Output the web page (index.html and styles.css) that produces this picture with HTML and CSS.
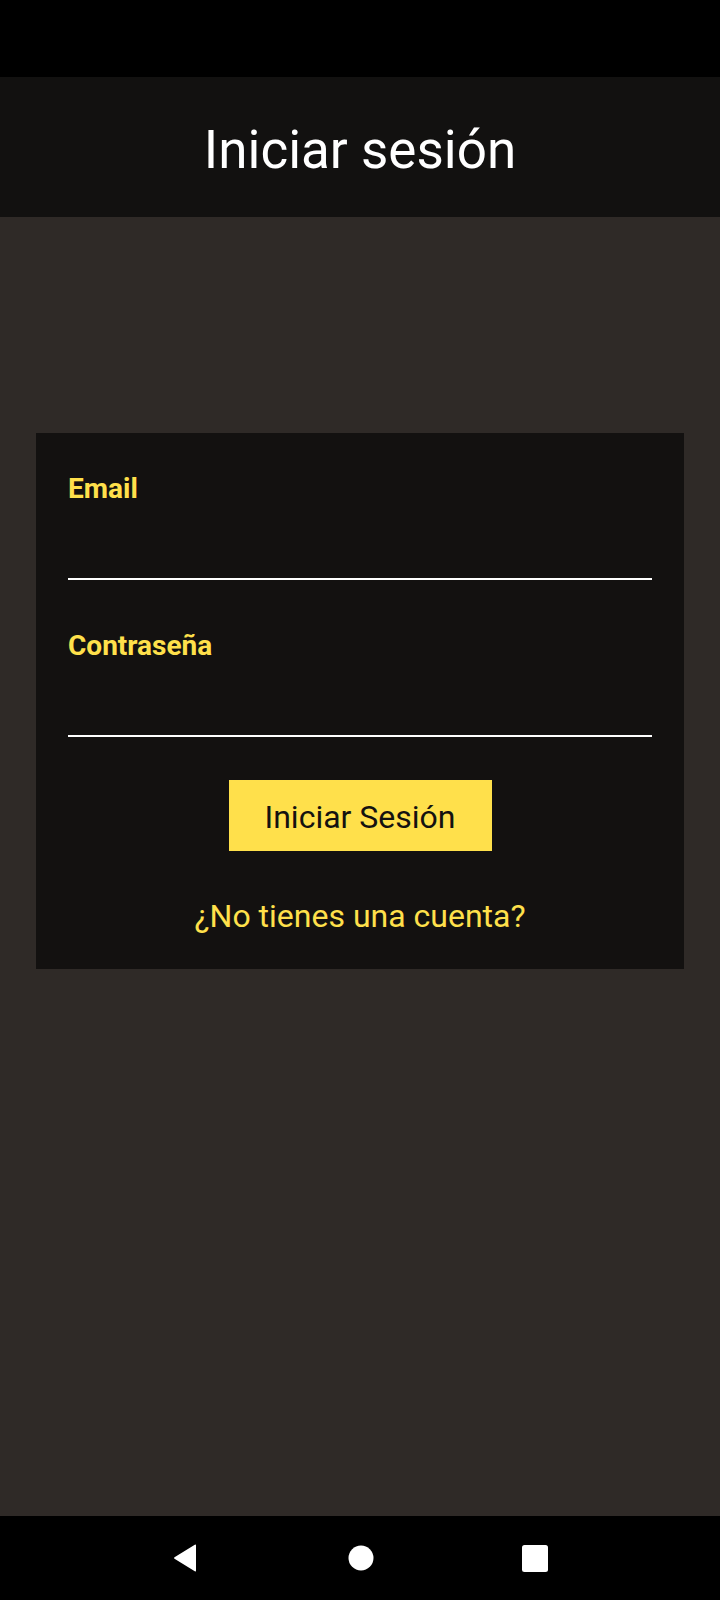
FILE: index.html
```html
<!DOCTYPE html>
<html lang="es">
<head>
<meta charset="utf-8">
<title>Iniciar sesión</title>
<link rel="stylesheet" href="styles.css">
</head>
<body>
<div class="screen">
  <div class="status-bar"></div>
  <header class="app-bar">
    <h1 class="app-title">Iniciar sesión</h1>
  </header>
  <main class="content">
    <form class="card">
      <div class="field">
        <label class="field-label" for="email">Email</label>
        <input class="field-input field-input--email" id="email" type="email">
      </div>
      <div class="field field--second">
        <label class="field-label" for="pass">Contraseña</label>
        <input class="field-input field-input--pass" id="pass" type="password">
      </div>
      <div class="actions">
        <button class="btn" type="button">Iniciar Sesión</button>
        <a class="link">¿No tienes una cuenta?</a>
      </div>
    </form>
  </main>
  <nav class="nav-bar">
    <svg class="nav-icon" width="26" height="28" viewBox="0 0 26 28"><path d="M24 1.5 L24 26.5 Q24 28 22.8 27.2 L2.5 14.8 Q1.4 14 2.5 13.2 L22.8 0.8 Q24 0 24 1.5 Z" fill="#fff"/></svg>
    <svg class="nav-icon" width="26" height="26" viewBox="0 0 26 26"><circle cx="13" cy="13" r="12.5" fill="#fff"/></svg>
    <svg class="nav-icon" width="26" height="27" viewBox="0 0 26 27"><rect x="0" y="0" width="26" height="27" rx="2.5" fill="#fff"/></svg>
  </nav>
</div>
</body>
</html>
```
FILE: styles.css
```css
* { box-sizing: border-box; }
html, body {
  margin: 0;
  padding: 0;
  background: #2f2a27;
}
body {
  font-family: Roboto, "Noto Sans", "Liberation Sans", sans-serif;
}
.screen {
  width: 720px;
  height: 1600px;
  display: flex;
  flex-direction: column;
  background: #2f2a27;
}
.status-bar {
  height: 77px;
  background: #000;
  flex: none;
}
.app-bar {
  height: 140px;
  flex: none;
  background: #121110;
  padding-top: 42px;
}
.app-title {
  margin: 0;
  text-align: center;
  color: #fff;
  font-weight: 400;
  font-size: 53px;
  line-height: 62px;
}
.content {
  flex: 1;
  padding: 216px 36px 0 36px;
}
.card {
  background: #131110;
  padding: 39px 32px 34px 32px;
  display: flex;
  flex-direction: column;
}
.field {
  display: flex;
  flex-direction: column;
}
.field--second {
  margin-top: 49px;
}
.field-label {
  color: #ffe04b;
  font-weight: 700;
  font-size: 28px;
  line-height: 33px;
}
.field-input {
  background: transparent;
  border: none;
  border-bottom: 2px solid #fff;
  outline: none;
  color: #fff;
  font: inherit;
  font-size: 28px;
  padding: 0;
  margin: 0;
  width: 100%;
}
.field-input--email { height: 75px; }
.field-input--pass { height: 75px; }
.actions {
  display: flex;
  flex-direction: column;
  align-items: center;
  margin-top: 43px;
  gap: 46px;
}
.btn {
  width: 263px;
  height: 71px;
  background: #ffe04b;
  border: none;
  border-radius: 0;
  color: #141210;
  font-family: inherit;
  font-size: 32px;
  line-height: 71px;
  padding: 0;
  padding-top: 2px;
}
.link {
  color: #ffe04b;
  font-size: 32px;
  line-height: 38px;
}
.nav-bar {
  height: 84px;
  flex: none;
  background: #000;
  display: flex;
  align-items: center;
  justify-content: center;
}
.nav-icon { display: block; }
.nav-icon:nth-child(1) { margin-right: 150px; }
.nav-icon:nth-child(2) { margin-right: 148px; }
```
